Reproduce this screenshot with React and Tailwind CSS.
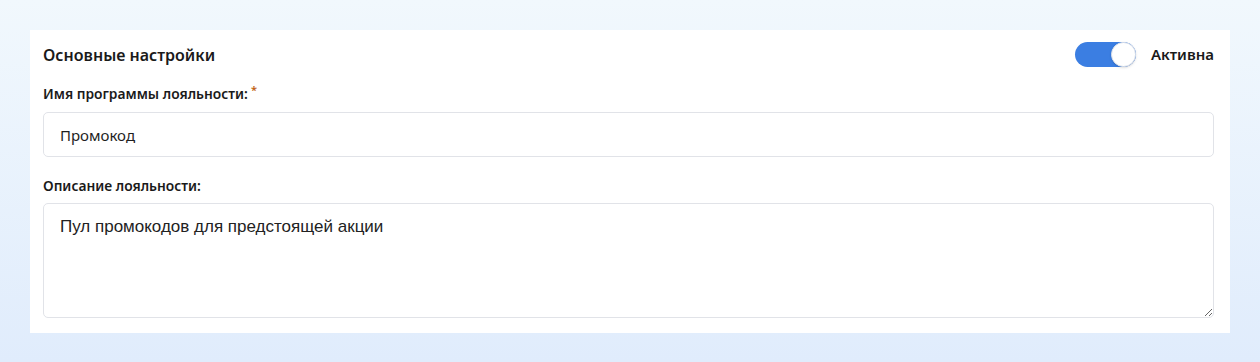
import React, { useState } from 'react';

const App = () => {
  const [active, setActive] = useState(true);
  const [name, setName] = useState('Промокод');
  const [desc, setDesc] = useState('Пул промокодов для предстоящей акции');

  return (
    <div className="w-full h-[362px] bg-gradient-to-b from-[#f1f8fd] to-[#e0ecfc] px-[30px] pt-[30px] font-['Noto_Sans',sans-serif]">
      <div className="bg-white pl-[13px] pr-[16px] pt-[12px] pb-[15px]">
        <div className="flex items-center justify-between h-[25px]">
          <h2 className="text-[16px] font-semibold text-[#1a1a1a]">Основные настройки</h2>
          <div className="flex items-center gap-[15px]">
            <button
              type="button"
              onClick={() => setActive(!active)}
              className={`relative w-[61px] h-[25px] rounded-full transition-colors ${active ? 'bg-[#3b7ee2]' : 'bg-gray-300'}`}
            >
              <span className={`absolute top-0 w-[25px] h-[25px] rounded-full bg-white border border-[#dfe3ea] shadow-sm transition-all ${active ? 'left-[36px]' : 'left-0'}`}></span>
            </button>
            <span className="text-[15px] font-semibold text-[#1a1a1a]">Активна</span>
          </div>
        </div>

        <label className="block mt-[18px] text-[13.8px] font-semibold text-[#1a1a1a] leading-[18px]">
          Имя программы лояльности:<sup className="text-[#c0600f] ml-[3px] text-[11px]">*</sup>
        </label>
        <input
          type="text"
          value={name}
          onChange={(e) => setName(e.target.value)}
          className="block w-full mt-[9px] h-[45px] px-[16px] border border-[#e1e3e8] rounded-[5px] text-[15px] text-[#1e1e1e] focus:outline-none"
        />

        <label className="block mt-[20px] text-[13.8px] font-semibold text-[#1a1a1a] leading-[18px]">
          Описание лояльности:
        </label>
        <textarea
          value={desc}
          onChange={(e) => setDesc(e.target.value)}
          className="block w-full mt-[8px] h-[115px] px-[16px] py-[12px] border border-[#e1e3e8] rounded-[5px] text-[17px] leading-[22px] text-[#222] font-['Liberation_Sans',Arial,sans-serif] focus:outline-none"
        />
      </div>
    </div>
  );
};

export default App;
